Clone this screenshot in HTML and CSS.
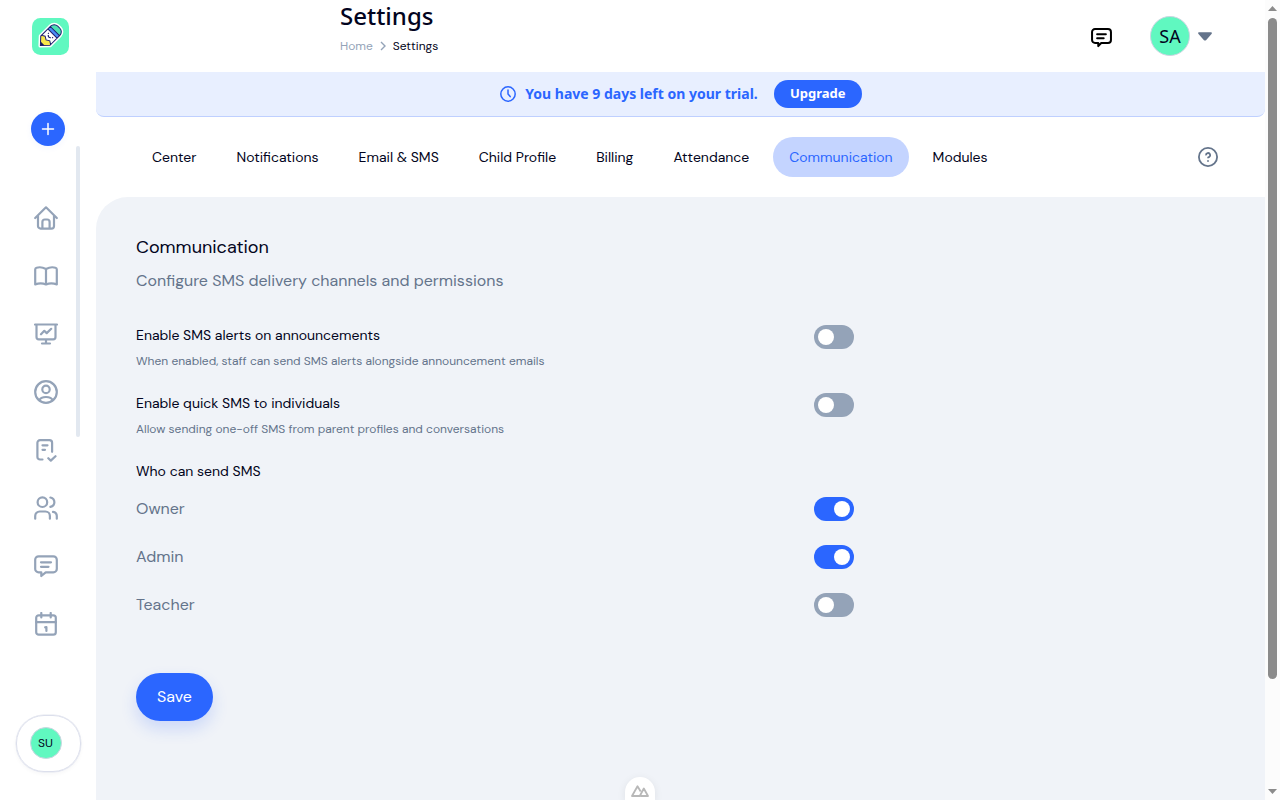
FILE: index.html
```html
<!DOCTYPE html>
<html lang="en">
<head>
    <meta charset="UTF-8">
    <meta name="viewport" content="width=device-width, initial-scale=1.0">
    <title>Settings</title>
    <link rel="stylesheet" href="styles.css">
</head>
<body>

    <!-- Sidebar -->
    <aside class="sidebar">
        <svg class="logo" viewBox="0 0 37 37">
            <rect width="37" height="37" rx="8.5" fill="#60f8c0"/>
            <g transform="translate(17.600 18.400) rotate(45)">
                <path d="M-6.500-8a5 5 0 0 1 5-5h3a5 5 0 0 1 5 5V6L0 13-6.500 6z" fill="#fff" stroke="#fff" stroke-width="4" stroke-linejoin="round"/>
                <path d="M-6.500-7v-1a5 5 0 0 1 5-5h3a5 5 0 0 1 5 5v1z" fill="#4ce0b3"/>
                <path d="M-6.500-7.500h13v3.500h-13z" fill="#4a8cf5"/>
                <path d="M-6.500 5l3.200-2L0 5l3.300-2 3.200 2v1L0 13-6.500 6z" fill="#f7e64a"/>
                <path d="M-3 10h6L0 13z" fill="#1c1c5c"/>
                <path d="M-6.500-8a5 5 0 0 1 5-5h3a5 5 0 0 1 5 5V6L0 13-6.500 6zM-6.500-7.500h13M-6.500-4h13M-6.500 5l3.200-2L0 5l3.300-2 3.200 2" fill="none" stroke="#1c1c6c" stroke-width="1"/>
                <path d="M-3-1.800v1M3-1.800v1M-1.900 0q1.900 2.200 3.800 0" fill="none" stroke="#1c1c6c" stroke-width="1.200"/>
            </g>
        </svg>

        <button class="add-btn">
            <svg width="14" height="14" viewBox="0 0 14 14"><path d="M7 1.500v11M1.500 7h11"/></svg>
        </button>

        <nav class="side-nav">
            <div class="side-links">
                <svg class="icon" viewBox="0 0 24 24"><path d="M1.200 12 12 1.300 22.800 12M4 9.500V20a2.600 2.600 0 0 0 2.600 2.600h10.800A2.600 2.600 0 0 0 20 20V9.500M8.400 22.500V16a2.500 2.500 0 0 1 2.500-2.500h2.200a2.500 2.500 0 0 1 2.500 2.500v6.500"/></svg>
                <svg class="icon" viewBox="0 0 24 24"><path d="M12 5v15.500M12 5Q7 2.300 2.500 3.800q-1.300.4-1.300 1.600v15Q7 18.500 12 20.500q5-2 10.800-.1v-15q0-1.200-1.300-1.600Q17 2.300 12 5z"/></svg>
                <svg class="icon" viewBox="0 0 24 24"><path d="M1 2.500h22M2.500 2.500V15a2.300 2.300 0 0 0 2.300 2.300h14.400a2.300 2.300 0 0 0 2.300-2.300V2.500M12 17.300v4M8 21.500h8M7 12.300l3.300-3.500 2.400 2.300 4.500-4.300"/></svg>
                <svg class="icon" viewBox="0 0 24 24"><circle cx="12" cy="12" r="10.800"/><circle cx="12" cy="9.400" r="3.700"/><path d="M5.300 20.200C6.300 17.700 8.500 17 12 17s5.700.7 6.700 3.200"/></svg>
                <svg class="icon" viewBox="0 0 24 24"><path d="M8.500 21.500H6a2.600 2.600 0 0 1-2.600-2.600V4.800A2.600 2.600 0 0 1 6 2.200h9.500a2.600 2.600 0 0 1 2.600 2.600v9M8.500 7.300h5M8.500 11.800h2.500M14.300 20.200l2.500 2.400 4.700-4.400"/></svg>
                <svg class="icon" viewBox="0 0 24 24"><circle cx="8.400" cy="6.200" r="4.800"/><path d="M1.200 22.700V20a4.500 4.500 0 0 1 4.500-4.500h5.700a4.500 4.500 0 0 1 4.500 4.500v2.700M16.400 1.500c5.300 1.500 5.300 7.900 0 9.400M19 15.800a4.400 4.400 0 0 1 3.800 4.400v2.500"/></svg>
                <svg class="icon" viewBox="0 0 24 24"><path d="M4.600 2.300h14.800a3.400 3.400 0 0 1 3.400 3.400v9.200a3.400 3.400 0 0 1-3.400 3.400h-7.700L7.300 22v-3.700H4.600a3.400 3.400 0 0 1-3.400-3.400V5.700a3.400 3.400 0 0 1 3.400-3.400zM7 8.300h10M7 12.800h7.500"/></svg>
                <svg class="icon" viewBox="0 0 24 24"><rect x="2.200" y="3.300" width="19.600" height="19.400" rx="2.500"/><path d="M2.200 10.200h19.600M7.300 1v4.500M16.700 1v4.500M11.200 15.300l1.200-.3v4"/></svg>
            </div>
            <div class="side-thumb"></div>
        </nav>

        <div class="user-card">
            <div class="avatar avatar-sm">SU</div>
        </div>
    </aside>

    <main class="main">
        <!-- Top bar -->
        <header class="topbar">
            <div class="heading">
                <h1>Settings</h1>
                <div class="breadcrumb">
                    <span class="crumb">Home</span>
                    <svg width="6" height="10" viewBox="0 0 6 10"><path d="M1 1l4 4-4 4"/></svg>
                    <span>Settings</span>
                </div>
            </div>
            <div class="actions">
                <svg class="chat-icon" viewBox="0 0 24 24"><path d="M4.600 2.300h14.800a3.400 3.400 0 0 1 3.400 3.400v9.200a3.400 3.400 0 0 1-3.400 3.400h-7.700L8.300 21.800v-3.500H4.600a3.400 3.400 0 0 1-3.400-3.400V5.700a3.400 3.400 0 0 1 3.400-3.400zM7 8.300h10M7 12.800h7.500"/></svg>
                <div class="avatar">SA</div>
                <svg class="caret" width="14" height="9" viewBox="0 0 14 9"><path d="M1 .3h12q1.500.3.500 1.700L8 8.200q-1 .8-2 0L.5 2Q-.5.600 1 .3z"/></svg>
            </div>
        </header>

        <div class="trial">
            <svg class="clock" width="16" height="16" viewBox="0 0 16 16"><circle cx="8" cy="8" r="7.200"/><path d="M8 4v4l2.200 2.600"/></svg>
            <span>You have 9 days left on your trial.</span>
            <button class="upgrade-btn">Upgrade</button>
        </div>

        <div class="tabs-row">
            <div class="tabs">
                <a class="tab">Center</a>
                <a class="tab">Notifications</a>
                <a class="tab">Email &amp; SMS</a>
                <a class="tab">Child Profile</a>
                <a class="tab">Billing</a>
                <a class="tab">Attendance</a>
                <a class="tab active">Communication</a>
                <a class="tab">Modules</a>
            </div>
            <svg class="help" width="20" height="20" viewBox="0 0 20 20"><circle cx="10" cy="10" r="9.100"/><path d="M8 8.300a2.100 2.100 0 1 1 3.200 1.600q-1.200.4-1.200 1.400M10 13.200v1.600"/></svg>
        </div>

        <!-- Settings panel -->
        <section class="panel">
            <h2>Communication</h2>
            <p class="lead">Configure SMS delivery channels and permissions</p>

            <div class="setting">
                <div>
                    <div class="label">Enable SMS alerts on announcements</div>
                    <div class="hint">When enabled, staff can send SMS alerts alongside announcement emails</div>
                </div>
                <span class="toggle"></span>
            </div>
            <div class="setting">
                <div>
                    <div class="label">Enable quick SMS to individuals</div>
                    <div class="hint">Allow sending one-off SMS from parent profiles and conversations</div>
                </div>
                <span class="toggle"></span>
            </div>

            <div class="label who">Who can send SMS</div>
            <div class="role">Owner <span class="toggle on"></span></div>
            <div class="role">Admin <span class="toggle on"></span></div>
            <div class="role">Teacher <span class="toggle"></span></div>

            <button class="save-btn">Save</button>
        </section>
    </main>

    <div class="scrollbar">
        <svg width="9" height="5" viewBox="0 0 9 5"><path d="M0 5 4.500 0 9 5z"/></svg>
        <div class="thumb"></div>
        <svg class="down" width="9" height="5" viewBox="0 0 9 5"><path d="M0 0 4.500 5 9 0z"/></svg>
    </div>

    <div class="devtools">
        <svg width="18" height="12" viewBox="0 0 18 12"><path d="M9.500 11H17L12.800 3.500 8.800 11H1L6.500 1.200 9.700 6.500"/></svg>
    </div>

</body>
</html>
```
FILE: styles.css
```css
:root {
    --blue: #2b66ff;
    --mint: #60f8c0;
    --ink: #020420;
    --slate: #64748b;
    --muted: #94a3b8;
    --bg: #f0f3f8;
}

* { box-sizing: border-box; }

body {
    margin: 0;
    height: 800px;
    overflow: hidden;
    display: flex;
    background: white;
    color: var(--ink);
    font-family: 'DM Sans', 'Inter', sans-serif;
    font-size: 14px;
}

button {
    border: none;
    color: white;
    background: var(--blue);
    font-family: inherit;
    cursor: pointer;
}

svg { display: block; }

/* Sidebar */
.sidebar {
    width: 96px;
    padding-top: 18px;
    flex-shrink: 0;
}

.logo {
    width: 37px;
    height: 37px;
    margin-left: 32px;
}

.add-btn {
    width: 34px;
    height: 34px;
    margin: 57px 0 0 31px;
    padding: 0;
    border-radius: 50%;
    display: flex;
    align-items: center;
    justify-content: center;
    box-shadow: 0 2px 6px rgba(43,102,255,0.06);
}

.add-btn path {
    stroke: white;
    stroke-width: 1.5;
    stroke-linecap: round;
}

.side-nav {
    width: 80px;
    height: 569px;
    display: flex;
    justify-content: space-between;
}

.side-links {
    display: flex;
    flex-direction: column;
    gap: 34px;
    padding: 60px 0 0 34px;
}

.icon, .chat-icon {
    width: 24px;
    height: 24px;
    fill: none;
    stroke: var(--muted);
    stroke-width: 2.2;
    stroke-linecap: round;
    stroke-linejoin: round;
}

.side-thumb {
    width: 4px;
    height: 291px;
    border-radius: 2px;
    background: #e2e8f0;
}

.user-card {
    width: 65px;
    height: 57px;
    margin: -0.5px 0 0 15.5px;
    padding-left: 13px;
    border: 1px solid #dcdfec;
    border-radius: 28px;
    display: flex;
    align-items: center;
    box-shadow: 0 0 0 0.5px #e4e7f0, 0 2px 4px rgba(15,23,42,0.04);
}

.avatar {
    width: 40px;
    height: 40px;
    border-radius: 50%;
    border: 1px solid #cbd5e1;
    background: var(--mint);
    display: flex;
    align-items: center;
    justify-content: center;
    font-family: 'Noto Sans', sans-serif;
    font-size: 18px;
}

.avatar-sm {
    width: 32px;
    height: 32px;
    font-family: 'DM Sans', 'Inter', sans-serif;
    font-size: 12px;
}

/* Header */
.main {
    flex: 1;
    display: flex;
    flex-direction: column;
}

.topbar {
    height: 72px;
    display: flex;
    justify-content: space-between;
    padding: 0 53px 0 244px;
}

h1 {
    margin: 0;
    font-family: 'Noto Sans', sans-serif;
    font-size: 24px;
    font-weight: 500;
    line-height: 32px;
}

.breadcrumb {
    display: flex;
    align-items: center;
    gap: 7px;
    margin-top: 6px;
    font-size: 12px;
    line-height: 16px;
}

.breadcrumb path {
    fill: none;
    stroke: var(--muted);
    stroke-width: 1.4;
}

.crumb { color: var(--muted); }

.actions {
    display: flex;
    align-items: center;
}

.chat-icon {
    width: 21px;
    height: 21px;
    margin: 2px 38px 0 0;
    stroke: black;
    stroke-width: 2.3;
}

.caret {
    margin-left: 8px;
    fill: var(--slate);
}

.trial {
    height: 45px;
    display: flex;
    align-items: center;
    justify-content: center;
    padding: 0 0 1px 1px;
    background: #e8efff;
    border-bottom: 1px solid #bfd0ff;
    border-radius: 0 0 8px 8px;
    color: var(--blue);
    font-family: 'Noto Sans', sans-serif;
    font-size: 14px;
    font-weight: 700;
}

.clock {
    margin-right: 9px;
    fill: none;
    stroke: var(--blue);
    stroke-width: 1.5;
    stroke-linecap: round;
}

.upgrade-btn {
    width: 88px;
    height: 28px;
    margin-left: 16px;
    padding: 0 0 1px;
    border-radius: 14px;
    font-size: 13px;
    font-weight: 700;
}

/* Tabs */
.tabs-row {
    height: 80px;
    display: flex;
    align-items: center;
    justify-content: space-between;
    padding: 0 47px 0 40px;
}

.tabs {
    display: flex;
    gap: 8px;
}

.tab {
    height: 40px;
    padding: 0 16px;
    border-radius: 20px;
    line-height: 40px;
    white-space: nowrap;
}

.tab.active {
    background: #c4d4ff;
    color: var(--blue);
}

.help {
    fill: none;
    stroke: var(--slate);
    stroke-width: 1.8;
}

/* Panel */
.panel {
    flex: 1;
    padding: 38px 40px 0;
    background: var(--bg);
    border-radius: 32px 0 0 0;
}

h2 {
    margin: 0;
    font-size: 18px;
    font-weight: 400;
    line-height: 24px;
}

.lead {
    margin: 10px 0 32px;
    color: var(--slate);
    font-size: 16px;
    line-height: 24px;
}

.setting {
    width: 718px;
    height: 68px;
    display: flex;
    justify-content: space-between;
    padding-top: 12px;
    margin-top: -12px;
}

.setting + .setting { margin-top: 0; }

.label {
    font-size: 14px;
    line-height: 20px;
}

.hint {
    margin-top: 8px;
    color: var(--slate);
    font-size: 12px;
    line-height: 16px;
}

.toggle {
    width: 40px;
    height: 24px;
    padding: 4px;
    border-radius: 12px;
    background: var(--muted);
    display: flex;
}

.toggle::before {
    content: "";
    width: 16px;
    height: 16px;
    border-radius: 50%;
    background: white;
}

.toggle.on {
    background: var(--blue);
    justify-content: flex-end;
}

.who { margin: 12px 0 4px; }

.role {
    width: 718px;
    height: 48px;
    display: flex;
    align-items: center;
    justify-content: space-between;
    color: var(--slate);
    font-size: 16px;
    line-height: 24px;
}

.save-btn {
    width: 77px;
    height: 48px;
    margin-top: 44px;
    padding: 0;
    border-radius: 24px;
    font-size: 16px;
    line-height: 24px;
    box-shadow: 0 8px 16px rgba(43,102,255,0.18);
}

/* Page scrollbar */
.scrollbar {
    width: 15px;
    padding: 6px 3px;
    background: #fcfcfc;
    display: flex;
    flex-direction: column;
    align-items: center;
}

.scrollbar svg { fill: #8b8b8b; }

.thumb {
    width: 9px;
    height: 661px;
    margin-top: 7px;
    border-radius: 5px;
    background: #8b8b8b;
}

.down { margin-top: auto; }

/* Floating devtools button */
.devtools {
    position: absolute;
    left: 625px;
    top: 777px;
    width: 30px;
    height: 23px;
    padding: 8px 6px 0;
    border-radius: 15px 15px 0 0;
    background: white;
    box-shadow: 0 2px 8px rgba(0,0,0,0.08);
}

.devtools path {
    fill: none;
    stroke: #b8b8b8;
    stroke-width: 1.8;
    stroke-linejoin: round;
}
```
